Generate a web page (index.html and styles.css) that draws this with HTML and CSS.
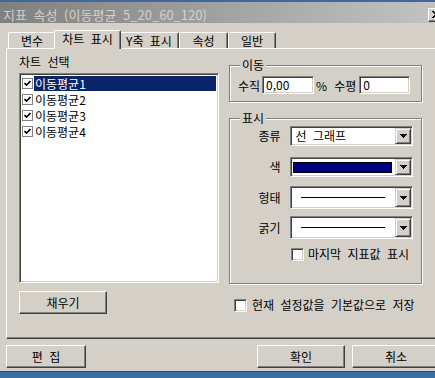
FILE: index.html
```html
<!DOCTYPE html>
<html lang="ko">
<head>
    <meta charset="UTF-8">
    <title>지표 속성</title>
    <link rel="stylesheet" href="styles.css">
</head>
<body>
    <div class="window">
        <div class="edge-top"></div>
        <div class="titlebar">
            <span class="title">지표 속성 (이동평균 5_20_60_120)</span>
            <span class="close-btn">
                <svg width="8" height="7" viewBox="0 0 8 7" shape-rendering="crispEdges">
                    <path d="M0 0h2v1H0zM6 0h2v1H6zM1 1h2v1H1zM5 1h2v1H5zM2 2h4v1H2zM3 3h2v1H3zM2 4h4v1H2zM1 5h2v1H1zM5 5h2v1H5zM0 6h2v1H0zM6 6h2v1H6z" fill="#000"/>
                </svg>
            </span>
        </div>
        <div class="client">
            <div class="tabs">
                <div class="tab tab-var">변수</div>
                <div class="tab tab-chart active">차트 표시</div>
                <div class="tab tab-y">Y축 표시</div>
                <div class="tab tab-prop">속성</div>
                <div class="tab tab-gen">일반</div>
            </div>
            <div class="tab-panel">
                <div class="col-left">
                    <div class="caption">차트 선택</div>
                    <div class="listbox">
                        <div class="list-item selected">
                            <span class="list-check"><svg width="7" height="7" viewBox="0 0 7 7"><path d="M0.5 3l2 2 4-4" fill="none" stroke="#000" stroke-width="1.6"/></svg></span>
                            <span class="item-text">이동평균1</span>
                        </div>
                        <div class="list-item">
                            <span class="list-check"><svg width="7" height="7" viewBox="0 0 7 7"><path d="M0.5 3l2 2 4-4" fill="none" stroke="#000" stroke-width="1.6"/></svg></span>
                            <span class="item-text">이동평균2</span>
                        </div>
                        <div class="list-item">
                            <span class="list-check"><svg width="7" height="7" viewBox="0 0 7 7"><path d="M0.5 3l2 2 4-4" fill="none" stroke="#000" stroke-width="1.6"/></svg></span>
                            <span class="item-text">이동평균3</span>
                        </div>
                        <div class="list-item">
                            <span class="list-check"><svg width="7" height="7" viewBox="0 0 7 7"><path d="M0.5 3l2 2 4-4" fill="none" stroke="#000" stroke-width="1.6"/></svg></span>
                            <span class="item-text">이동평균4</span>
                        </div>
                    </div>
                    <button class="btn fill-btn">채우기</button>
                </div>
                <div class="col-right">
                    <fieldset class="group move-group">
                        <legend>이동</legend>
                        <div class="move-row">
                            <span>수직</span>
                            <span class="field field-v">0,00</span>
                            <span class="pct">%</span>
                            <span>수평</span>
                            <span class="field field-h">0</span>
                        </div>
                    </fieldset>
                    <fieldset class="group display-group">
                        <legend>표시</legend>
                        <div class="form-row">
                            <span class="row-label">종류</span>
                            <div class="combo">
                                <span class="combo-text">선 그래프</span>
                                <span class="drop-btn"><svg width="7" height="4" viewBox="0 0 7 4" shape-rendering="crispEdges"><path d="M0 0h7v1H0zM1 1h5v1H1zM2 2h3v1H2zM3 3h1v1H3z" fill="#000"/></svg></span>
                            </div>
                        </div>
                        <div class="form-row r2">
                            <span class="row-label">색</span>
                            <div class="combo">
                                <span class="swatch"></span>
                                <span class="drop-btn"><svg width="7" height="4" viewBox="0 0 7 4" shape-rendering="crispEdges"><path d="M0 0h7v1H0zM1 1h5v1H1zM2 2h3v1H2zM3 3h1v1H3z" fill="#000"/></svg></span>
                            </div>
                        </div>
                        <div class="form-row r3">
                            <span class="row-label">형태</span>
                            <div class="combo tall">
                                <span class="line-sample"></span>
                                <span class="drop-btn"><svg width="7" height="4" viewBox="0 0 7 4" shape-rendering="crispEdges"><path d="M0 0h7v1H0zM1 1h5v1H1zM2 2h3v1H2zM3 3h1v1H3z" fill="#000"/></svg></span>
                            </div>
                        </div>
                        <div class="form-row r4">
                            <span class="row-label">굵기</span>
                            <div class="combo tall">
                                <span class="line-sample"></span>
                                <span class="drop-btn"><svg width="7" height="4" viewBox="0 0 7 4" shape-rendering="crispEdges"><path d="M0 0h7v1H0zM1 1h5v1H1zM2 2h3v1H2zM3 3h1v1H3z" fill="#000"/></svg></span>
                            </div>
                        </div>
                        <div class="check-row">
                            <span class="checkbox"></span>
                            <span>마지막 지표값 표시</span>
                        </div>
                    </fieldset>
                    <div class="save-row">
                        <span class="checkbox"></span>
                        <span class="save-text">현재 설정값을 기본값으로 저장</span>
                    </div>
                </div>
            </div>
            <div class="bottom-bar">
                <button class="btn edit-btn">편 집</button>
                <button class="btn ok-btn">확인</button>
                <button class="btn cancel-btn">취소</button>
            </div>
        </div>
    </div>
</body>
</html>
```

FILE: styles.css
```css
body {
    margin: 0;
    height: 378px;
    overflow: hidden;
    background-color: #3a6ea5;
    font-family: "Noto Sans CJK KR", "Noto Sans", sans-serif;
    font-size: 12px;
    word-spacing: 3px;
    color: #000;
}
.window {
    width: 446px;
    background-color: #d4d0c8;
    border-bottom: 1px solid #404040;
}
.edge-top {
    height: 2px;
    background-color: #41689a;
}
.titlebar {
    height: 21px;
    box-sizing: border-box;
    padding: 4px 2px 0 3px;
    display: flex;
    align-items: center;
    justify-content: space-between;
    background: linear-gradient(to right, #808080, #c4c4c4);
}
.title {
    font-size: 13px;
    line-height: 15px;
    color: #d4d0c8;
    white-space: nowrap;
}
.close-btn {
    width: 16px;
    height: 14px;
    box-sizing: border-box;
    display: flex;
    align-items: center;
    justify-content: center;
    background-color: #d4d0c8;
    border: 1px solid;
    border-color: #fff #404040 #404040 #fff;
    box-shadow: inset -1px -1px 0 #808080;
}
.client {
    padding: 0 0 3px 6px;
}

/* tabs */
.tabs {
    display: flex;
    align-items: flex-end;
    height: 18px;
    margin-top: 7px;
    margin-left: 2px;
}
.tab {
    height: 16px;
    box-sizing: border-box;
    display: flex;
    align-items: center;
    justify-content: center;
    padding-top: 1px;
    line-height: 14px;
    border-top: 1px solid #fff;
    border-left: 1px solid #fff;
    border-right: 1px solid #404040;
    border-radius: 2px 2px 0 0;
    box-shadow: inset -1px 0 0 #808080;
    white-space: nowrap;
}
.tab-var { width: 48px; }
.tab-chart { width: 67px; }
.tab-y { width: 60px; }
.tab-prop { width: 49px; }
.tab-gen { width: 48px; }
.tab.active {
    height: 19px;
    margin: 0 -2px -1px;
    padding: 0 0 3px;
    background-color: #d4d0c8;
    position: relative;
    z-index: 1;
}
.tab-panel {
    width: 440px;
    height: 291px;
    box-sizing: border-box;
    display: flex;
    gap: 10px;
    padding-left: 12px;
    border-top: 1px solid #fff;
    border-left: 1px solid #fff;
    border-bottom: 1px solid #404040;
    box-shadow: inset 0 -1px 0 #808080;
}

/* left column */
.col-left {
    width: 200px;
}
.caption {
    padding-top: 6px;
    line-height: 14px;
}
.listbox {
    height: 210px;
    margin-top: 4px;
    box-sizing: border-box;
    padding-top: 2px;
    background-color: #fff;
    border: 1px solid;
    border-color: #808080 #fff #fff #808080;
    box-shadow: inset 1px 1px 0 #404040, inset -1px -1px 0 #d4d0c8;
}
.list-item {
    height: 16px;
    display: flex;
    align-items: flex-start;
    padding-left: 2px;
    padding-right: 2px;
}
.list-check {
    width: 11px;
    height: 11px;
    box-sizing: border-box;
    margin-top: 2px;
    margin-right: 1px;
    border: 1px solid #808080;
    background-color: #fff;
    display: flex;
    align-items: center;
    justify-content: center;
}
.item-text {
    flex: 1;
    height: 15px;
    line-height: 15px;
    padding-left: 1px;
}
.list-item.selected .item-text {
    background-color: #0a246a;
    color: #fff;
}
.btn {
    height: 23px;
    box-sizing: border-box;
    padding: 0;
    font-family: "Noto Sans CJK KR", "Noto Sans", sans-serif;
    font-size: 12px;
    word-spacing: 3px;
    color: #000;
    background-color: #d4d0c8;
    border: 1px solid;
    border-color: #fff #404040 #404040 #fff;
    box-shadow: inset -1px -1px 0 #808080;
}
.fill-btn {
    width: 88px;
    margin-top: 8px;
}

/* right column */
.col-right {
    width: 193px;
}
.group {
    width: 193px;
    box-sizing: border-box;
    margin: 0;
    min-width: 0;
    padding: 0 8px;
    border: 1px solid #808080;
    box-shadow: 1px 1px 0 #fff, inset 1px 1px 0 #fff;
}
.group legend {
    padding: 0 2px;
    margin-left: 2px;
    line-height: 14px;
    background-color: #d4d0c8;
}
.move-group {
    margin-top: 9px;
    padding-top: 4px;
    padding-bottom: 7px;
}
.move-row {
    display: flex;
    align-items: center;
    height: 18px;
    white-space: nowrap;
}
.field {
    height: 18px;
    box-sizing: border-box;
    padding-left: 3px;
    line-height: 15px;
    background-color: #fff;
    border: 1px solid;
    border-color: #808080 #fff #fff #808080;
    box-shadow: inset 1px 1px 0 #404040, inset -1px -1px 0 #d4d0c8;
}
.field-v {
    width: 52px;
    margin-left: 2px;
}
.pct {
    margin-left: 2px;
    margin-right: 7px;
}
.field-h {
    width: 51px;
    margin-left: 3px;
}
.display-group {
    margin-top: 9px;
    padding-top: 1px;
    padding-bottom: 22px;
}
.form-row {
    display: flex;
    align-items: center;
}
.form-row.r2 { margin-top: 11px; }
.form-row.r3 { margin-top: 9px; }
.form-row.r4 { margin-top: 7px; }
.row-label {
    width: 43px;
    margin-right: 10px;
    text-align: right;
    line-height: 14px;
}
.combo {
    width: 124px;
    height: 20px;
    box-sizing: border-box;
    padding: 1px;
    display: flex;
    align-items: center;
    background-color: #fff;
    border: 1px solid;
    border-color: #808080 #fff #fff #808080;
    box-shadow: inset 1px 1px 0 #404040, inset -1px -1px 0 #d4d0c8;
}
.combo.tall {
    height: 23px;
}
.combo-text {
    flex: 1;
    padding-left: 3px;
    line-height: 14px;
}
.swatch {
    flex: 1;
    height: 11px;
    margin: 0 3px 0 1px;
    box-sizing: border-box;
    background-color: #000080;
    border: 1px solid #000;
}
.line-sample {
    width: 84px;
    height: 1px;
    margin-left: 9px;
    margin-right: auto;
    background-color: #000;
}
.drop-btn {
    width: 16px;
    align-self: stretch;
    box-sizing: border-box;
    display: flex;
    align-items: center;
    justify-content: center;
    background-color: #d4d0c8;
    border: 1px solid;
    border-color: #d4d0c8 #404040 #404040 #d4d0c8;
    box-shadow: inset 1px 1px 0 #fff, inset -1px -1px 0 #808080;
}
.check-row {
    display: flex;
    align-items: center;
    margin-top: 8px;
    padding-left: 53px;
    line-height: 14px;
    white-space: nowrap;
}
.checkbox {
    width: 13px;
    height: 13px;
    box-sizing: border-box;
    margin-right: 4px;
    background-color: #fff;
    border: 1px solid;
    border-color: #808080 #fff #fff #808080;
    box-shadow: inset 1px 1px 0 #404040, inset -1px -1px 0 #d4d0c8;
}
.save-row {
    display: flex;
    align-items: center;
    margin-top: 14px;
    padding-left: 5px;
    line-height: 14px;
    white-space: nowrap;
}
.save-row .checkbox {
    margin-right: 5px;
}

/* bottom buttons */
.bottom-bar {
    display: flex;
    margin-top: 6px;
}
.edit-btn {
    width: 80px;
}
.ok-btn {
    width: 88px;
    margin-left: 171px;
}
.cancel-btn {
    width: 88px;
    margin-left: 7px;
}
```
